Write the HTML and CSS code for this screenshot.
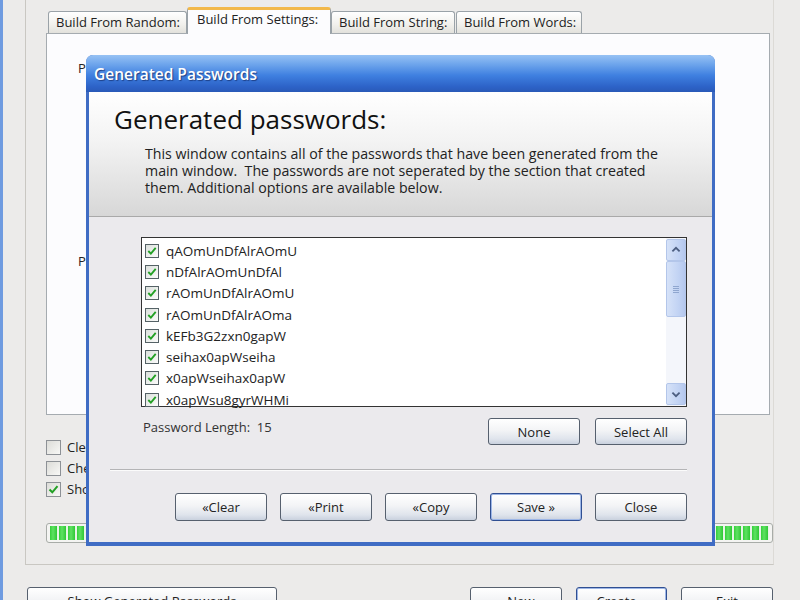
FILE: index.html
```html
<!DOCTYPE html>
<html>
<head>
<meta charset="utf-8">
<link rel="stylesheet" href="styles.css">
</head>
<body>
<div class="app">
  <div class="frame">
    <div class="group">
      <div class="tabs">
        <div class="tab t1">Build From Random:</div>
        <div class="tab t2 active">Build From Settings:</div>
        <div class="tab t3">Build From String:</div>
        <div class="tab t4">Build From Words:</div>
      </div>
      <div class="panel">
        <div class="plabel first">Password Length</div>
        <div class="plabel second">Password Count</div>
      </div>
      <div class="options">
        <div class="opt"><span class="cbox"></span><span class="olabel">Clear on create</span></div>
        <div class="opt"><span class="cbox"></span><span class="olabel">Check duplicates</span></div>
        <div class="opt"><span class="cbox on"><svg viewBox="0 0 13 13"><path d="M2.5 6.5 L5.3 9.3 L10.5 3.2"/></svg></span><span class="olabel">Show passwords</span></div>
      </div>
      <div class="progress">
        <div class="fill"></div>
      </div>
    </div>
    <div class="footer">
      <button class="btn wide">Show Generated Passwords</button>
      <div class="spacer"></div>
      <button class="btn">« New</button>
      <button class="btn default">Create »</button>
      <button class="btn">Exit</button>
    </div>
  </div>

  <div class="dialog">
    <div class="titlebar">Generated Passwords</div>
    <div class="dbody">
      <div class="header">
        <h1>Generated passwords:</h1>
        <p>This window contains all of the passwords that have been generated from the main window.&nbsp; The passwords are not seperated by the section that created them. Additional options are available below.</p>
      </div>
      <div class="content">
        <div class="listbox">
          <ul class="items">
            <li><span class="lcb"><svg viewBox="0 0 13 13"><path d="M2.5 6.5 L5.3 9.3 L10.5 3.2"/></svg></span>qAOmUnDfAlrAOmU</li>
            <li><span class="lcb"><svg viewBox="0 0 13 13"><path d="M2.5 6.5 L5.3 9.3 L10.5 3.2"/></svg></span>nDfAlrAOmUnDfAl</li>
            <li><span class="lcb"><svg viewBox="0 0 13 13"><path d="M2.5 6.5 L5.3 9.3 L10.5 3.2"/></svg></span>rAOmUnDfAlrAOmU</li>
            <li><span class="lcb"><svg viewBox="0 0 13 13"><path d="M2.5 6.5 L5.3 9.3 L10.5 3.2"/></svg></span>rAOmUnDfAlrAOma</li>
            <li><span class="lcb"><svg viewBox="0 0 13 13"><path d="M2.5 6.5 L5.3 9.3 L10.5 3.2"/></svg></span>kEFb3G2zxn0gapW</li>
            <li><span class="lcb"><svg viewBox="0 0 13 13"><path d="M2.5 6.5 L5.3 9.3 L10.5 3.2"/></svg></span>seihax0apWseiha</li>
            <li><span class="lcb"><svg viewBox="0 0 13 13"><path d="M2.5 6.5 L5.3 9.3 L10.5 3.2"/></svg></span>x0apWseihax0apW</li>
            <li><span class="lcb"><svg viewBox="0 0 13 13"><path d="M2.5 6.5 L5.3 9.3 L10.5 3.2"/></svg></span>x0apWsu8gyrWHMi</li>
          </ul>
          <div class="scrollbar">
            <div class="sbtn"><svg viewBox="0 0 20 20"><path d="M6 11.5 L10 7.5 L14 11.5"/></svg></div>
            <div class="thumb"><span></span><span></span><span></span><span></span></div>
            <div class="track"></div>
            <div class="sbtn"><svg viewBox="0 0 20 20"><path d="M6 8.5 L10 12.5 L14 8.5"/></svg></div>
          </div>
        </div>
        <div class="lenrow">
          <span class="lenlabel">Password Length:&nbsp; 15</span>
          <div class="spacer"></div>
          <button class="btn">None</button>
          <button class="btn">Select All</button>
        </div>
        <div class="sep"></div>
        <div class="actions">
          <button class="btn">«Clear</button>
          <button class="btn">«Print</button>
          <button class="btn">«Copy</button>
          <button class="btn default">Save »</button>
          <button class="btn">Close</button>
        </div>
      </div>
    </div>
  </div>
</div>
</body>
</html>
```

FILE: styles.css
```css
* { box-sizing: border-box; }
html, body { margin: 0; padding: 0; }
body {
  width: 800px;
  height: 600px;
  overflow: hidden;
  background: #ecebea;
  font-family: "Open Sans", "Noto Sans", sans-serif;
  font-size: 13px;
  color: #222;
}
.app { position: relative; width: 800px; height: 600px; }
.frame {
  height: 600px;
  border-left: 3px solid #6f9be0;
  display: flex;
  flex-direction: column;
}
.group {
  flex-shrink: 0;
  margin-left: 22px;
  width: 749px;
  height: 565px;
  border-left: 1px solid #c9c7c2;
  border-right: 1px solid #dcdad6;
  border-bottom: 1px solid #c9c7c2;
  padding-left: 20px;
  display: flex;
  flex-direction: column;
}
.tabs {
  display: flex;
  align-items: flex-end;
  height: 33px;
  padding-top: 7px;
  margin-left: 2px;
  position: relative;
  z-index: 2;
  flex-shrink: 0;
}
.tab {
  height: 22px;
  border: 1px solid #9aa2a8;
  border-bottom: none;
  border-radius: 3px 3px 0 0;
  background: linear-gradient(#ffffff, #f1f0ec 60%, #e2e1dc);
  font-size: 13px;
  line-height: 20px;
  padding-left: 7px;
  color: #222;
  white-space: nowrap;
}
.t1 { width: 139px; }
.t2 { width: 144px; }
.t3 { width: 124px; }
.t4 { width: 126px; margin-left: 1px; }
.tab.active {
  height: 27px;
  margin-bottom: -1px;
  background: #fcfcfe;
  border-top: 3px solid #f2b84a;
  padding-left: 9px;
  line-height: 19px;
}
.panel {
  flex-shrink: 0;
  width: 724px;
  height: 382px;
  border: 1px solid #a5abb0;
  background: #fcfcfe;
  padding: 25px 0 0 31px;
  position: relative;
}
.plabel {
  font-size: 13px;
  color: #222;
  width: 10px;
  overflow: hidden;
  white-space: nowrap;
}
.plabel.second { margin-top: 175px; }
.options { margin-top: 24px; flex-shrink: 0; }
.opt {
  height: 21px;
  display: flex;
  align-items: flex-start;
  gap: 6px;
  font-size: 13px;
}
.olabel { line-height: 17px; }
.cbox {
  width: 15px;
  height: 15px;
  margin-top: 1px;
  border: 1px solid #8d9196;
  background: linear-gradient(135deg, #dcdcd8, #f8f8f6);
  display: flex;
}
.cbox svg, .lcb svg { width: 100%; height: 100%; }
.cbox path, .lcb path { fill: none; stroke: #22a024; stroke-width: 2; }
.progress {
  flex-shrink: 0;
  margin-top: 21px;
  width: 727px;
  height: 20px;
  border: 1px solid #a8aca8;
  border-radius: 3px;
  background: #f4f4f2;
  padding: 2px 3px;
}
.fill {
  height: 100%;
  background: repeating-linear-gradient(90deg, #35cf3a 0, #5fe163 3px, #2fc835 7px, #e8f4e8 7px, #e8f4e8 9px);
}
.footer {
  flex-shrink: 0;
  display: flex;
  margin-top: 22px;
  padding-left: 24px;
  gap: 14px;
  width: 770px;
}
.footer .btn.wide { width: 250px; }
.footer .spacer { flex: 1; }
.footer .btn { width: 92px; }
.footer .btn.default { width: 91px; }

.btn {
  height: 28px;
  border: 1px solid #56606e;
  border-radius: 3px;
  background: linear-gradient(#ffffff, #f3f4f6 45%, #dfe4ec 80%, #c9d1de);
  font-family: "Open Sans", "Noto Sans", sans-serif;
  font-size: 13px;
  color: #222;
  padding: 0;
}
.btn.default {
  border-color: #304f92;
  box-shadow: inset 0 0 0 1px #9db6e6;
}

.dialog {
  position: absolute;
  left: 86px;
  top: 55px;
  width: 629px;
  height: 491px;
  border-radius: 7px 7px 0 0;
  background: #3f6cc4;
  padding: 0 3px 4px 3px;
  display: flex;
  flex-direction: column;
  z-index: 10;
}
.titlebar {
  height: 37px;
  margin: 0 -3px;
  border-radius: 7px 7px 0 0;
  background: linear-gradient(#97c2f4 0%, #6ea5ec 25%, #3f80e0 55%, #2d63c8 85%, #2a5ab8 100%);
  color: #fff;
  font-weight: 600;
  font-size: 15.5px;
  padding: 8px 0 0 8px;
  text-shadow: 1px 1px 1px #1d3f86;
}
.dbody {
  flex: 1;
  background: #ebeaed;
  display: flex;
  flex-direction: column;
}
.header {
  height: 125px;
  background: linear-gradient(#ffffff, #f3f3f3 40%, #d7d7d7);
  border-bottom: 1px solid #a9a9a9;
  padding: 8px 0 0 25px;
}
.header h1 {
  margin: 0;
  font-weight: 400;
  font-size: 26px;
  line-height: 38px;
  color: #111;
}
.header p {
  margin: 7px 0 0 31px;
  width: 522px;
  font-size: 14.2px;
  line-height: 17px;
  color: #222;
}
.content {
  padding: 20px 25px 0 52px;
}
.listbox {
  width: 546px;
  height: 170px;
  border: 1px solid #333;
  background: #fff;
  display: flex;
}
.items {
  list-style: none;
  margin: 0;
  padding: 2px 0 0 3px;
  flex: 1;
}
.items li {
  height: 21.3px;
  display: flex;
  align-items: center;
  gap: 7px;
  font-size: 13.5px;
  color: #222;
}
.lcb {
  width: 14px;
  height: 14px;
  border: 1px solid #556266;
  background: linear-gradient(135deg, #dbe0dc, #fbfbfa);
  display: flex;
}
.scrollbar {
  width: 20px;
  display: flex;
  flex-direction: column;
  background: #f4f6fb;
  padding: 1px 0;
}
.sbtn, .thumb {
  border: 1px solid #b3c6ea;
  border-radius: 2px;
  background: linear-gradient(90deg, #d6e2f8, #c3d4f4 60%, #b5c8ee);
}
.sbtn { height: 22px; display: flex; }
.sbtn svg { width: 100%; height: 100%; }
.sbtn path { fill: none; stroke: #4c5e80; stroke-width: 2; }
.thumb {
  height: 56px;
  display: flex;
  flex-direction: column;
  align-items: center;
  justify-content: center;
  gap: 1px;
}
.thumb span { width: 6px; height: 1px; background: #8fa6cf; }
.track { flex: 1; }
.lenrow {
  display: flex;
  align-items: flex-start;
  margin-top: 11px;
  width: 546px;
  gap: 15px;
}
.lenrow .lenlabel { font-size: 13px; color: #333; margin-left: 2px; line-height: 18px; }
.lenrow .spacer { flex: 1; }
.lenrow .btn { width: 92px; height: 27px; }
.sep {
  height: 2px;
  margin: 24px 0 0 -31px;
  width: 577px;
  border-top: 1px solid #b4b4b6;
  border-bottom: 1px solid #fbfbfb;
}
.actions {
  display: flex;
  justify-content: flex-end;
  gap: 13px;
  margin-top: 22px;
  width: 546px;
}
.actions .btn { width: 92px; }
```
